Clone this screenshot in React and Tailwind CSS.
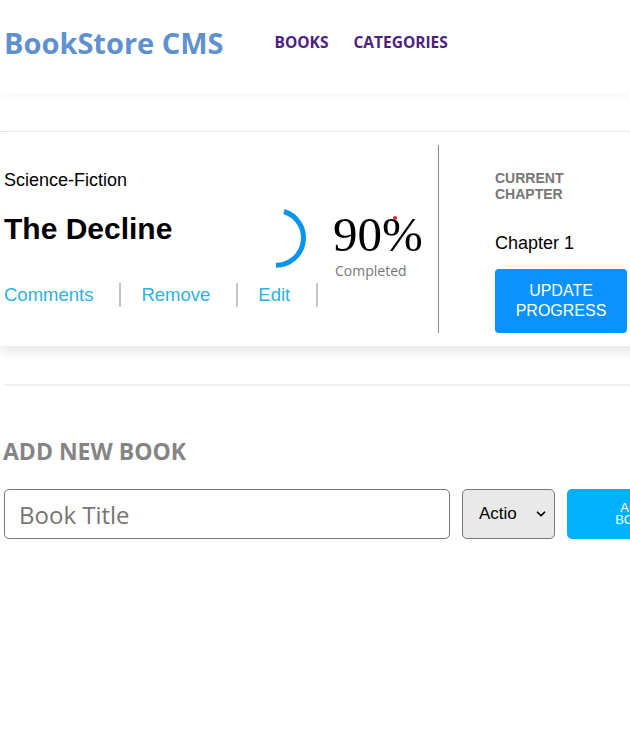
import { ChevronDown } from "lucide-react";

const sans = { fontFamily: '"Open Sans", "Noto Sans", sans-serif' };
const arial = { fontFamily: '"Liberation Sans", Arial, sans-serif' };

function Progress({ percent }) {
  return (
    <div className="flex items-center">
      <svg width="64" height="64" viewBox="0 0 64 64" className="mr-[24px] -mt-[16px]">
        <path
          d="M 37 5.5 A 27.5 27.5 0 0 1 29 59.3"
          fill="none"
          stroke="#0796ee"
          strokeWidth="5"
        />
      </svg>
      <div className="flex flex-col">
        <span className="relative text-[49px] leading-[48px] text-black -ml-[2px]" style={{ fontFamily: '"Liberation Serif", "Times New Roman", serif' }}>
          {percent}%
          <span className="absolute left-[60px] top-[5px] w-[4px] h-[4px] rounded-full bg-[#d42a2a]" />
        </span>
        <span className="text-[14px] text-[#777] mt-[1px]" style={sans}>Completed</span>
      </div>
    </div>
  );
}

export default function App() {
  const links = ["Comments", "Remove", "Edit"];

  return (
    <div className="w-[630px] h-[755px] overflow-hidden bg-white">
      {/* Header */}
      <header className="h-[93px] bg-white flex items-center pl-[4px] pb-[7px] shadow-[0_3px_10px_rgba(0,0,0,0.04)] relative z-10" style={sans}>
        <h1 className="text-[29px] font-bold text-[#6091cf]">BookStore CMS</h1>
        <nav className="flex gap-[25px] ml-[51px] text-[15.5px] font-bold text-[#4b2280]">
          <span>BOOKS</span>
          <span>CATEGORIES</span>
        </nav>
      </header>

      {/* Book card */}
      <div className="w-[760px] mt-[38px] bg-white border-t border-[#e6e6e6] shadow-[0_6px_10px_rgba(0,0,0,0.09)] flex py-[13px]" style={arial}>
        <div className="w-[247px] pl-[4px] pt-[24px] shrink-0">
          <p className="text-[18px] leading-[22px] text-black">Science-Fiction</p>
          <h2 className="text-[30px] leading-[34px] font-bold text-black mt-[21px]">The Decline</h2>
          <div className="flex items-center mt-[35px] text-[18.5px] text-[#2fb2e2]">
            {links.map((l) => (
              <div key={l} className="flex items-center">
                <span>{l}</span>
                <span className="w-[2px] h-[24px] bg-[#c4c4c4] ml-[26px] mr-[20px]" />
              </div>
            ))}
          </div>
        </div>

        <div className="w-[191px] shrink-0 pt-[66px]">
          <Progress percent={90} />
        </div>

        <div className="border-l border-[#8a8a8a] pl-[56px] pt-[25px] h-[188px]">
          <p className="text-[14px] leading-[16px] font-bold text-[#777] uppercase">Current<br />Chapter</p>
          <p className="text-[18px] text-black mt-[28px]">Chapter 1</p>
          <button className="mt-[12px] w-[132px] h-[64px] bg-[#0b93fb] text-white text-[16px] leading-[20px] rounded-[4px]">
            UPDATE<br />PROGRESS
          </button>
        </div>
      </div>

      <hr className="mt-[38px] ml-[4px] border-t-2 border-[#f0f0f0]" />

      {/* Add book form */}
      <section className="pl-[3px] pt-[49px]">
        <h2 className="text-[23px] leading-[32px] font-bold text-[#858585]" style={sans}>ADD NEW BOOK</h2>
        <form className="flex gap-[12px] mt-[22px] pl-[1px] w-[760px]">
          <input
            placeholder="Book Title"
            className="w-[446px] h-[50px] border border-[#787878] rounded-[5px] pl-[14px] text-[24px] placeholder:text-[#767676] outline-none"
            style={sans}
          />
          <div className="relative w-[93px] h-[50px]">
            <select
              className="appearance-none w-full h-full bg-[#e9e9e9] border border-[#787878] rounded-[5px] pl-[16px] text-[17px] text-black"
              style={arial}
              defaultValue="Actio"
            >
              <option>Actio</option>
            </select>
            <ChevronDown className="absolute right-[7px] top-[18px] w-[14px] h-[14px] pointer-events-none" strokeWidth={3} />
          </div>
          <button
            type="button"
            className="w-[134px] h-[50px] bg-[#03b0fc] text-white text-[13px] leading-[12px] rounded-[5px]"
            style={arial}
          >
            ADD<br />BOOK
          </button>
        </form>
      </section>
    </div>
  );
}
